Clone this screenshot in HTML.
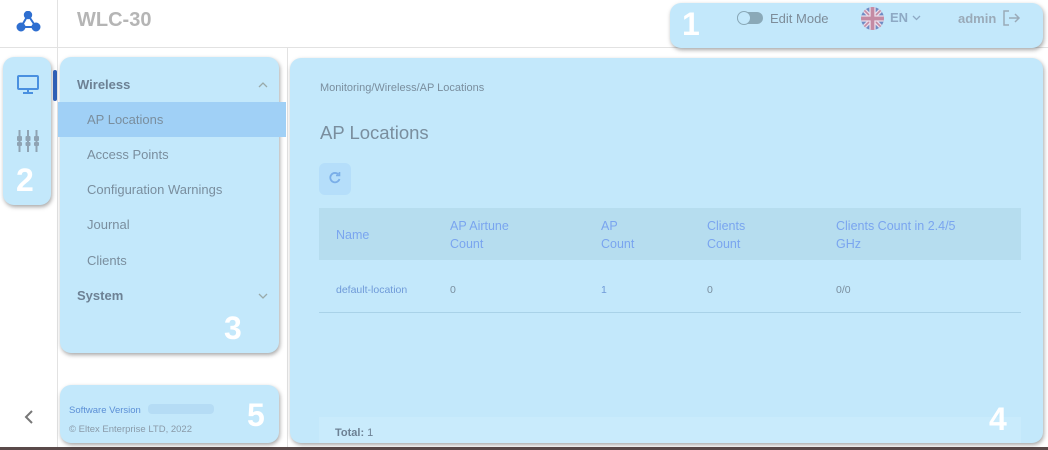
<!DOCTYPE html>
<html><head><meta charset="utf-8"><style>
*{box-sizing:border-box;margin:0;padding:0}
body{width:1048px;height:450px;overflow:hidden;background:#fff;font-family:"Liberation Sans",sans-serif;position:relative;color:#7d8c99}
.a{position:absolute}
.hl{position:absolute;background:#c3e8fb;border-radius:11px;box-shadow:1px 2px 4px rgba(0,0,0,.35)}
.num{position:absolute;color:#fff;font-weight:bold;font-size:32px}
.mi{position:absolute;left:87px;font-size:13px;color:#7a8e9e}
</style></head><body>
<div class="a" style="left:0;top:47px;width:1048px;height:1px;background:#e2e2e2"></div>
<div class="a" style="left:57px;top:0;width:1px;height:450px;background:#e2e2e2"></div>
<div class="a" style="left:287px;top:48px;width:1px;height:402px;background:#e2e2e2"></div>
<div class="a" style="left:0;top:447px;width:1048px;height:3px;background:#5a4a4a"></div>
<svg class="a" style="left:16px;top:11px" width="26" height="22" viewBox="0 0 26 22"><g fill="#2f6fd0" stroke="#2f6fd0" stroke-width="2"><line x1="12" y1="4" x2="5" y2="16"/><line x1="12" y1="4" x2="20" y2="16"/><line x1="5" y1="16" x2="20" y2="16"/><circle cx="12" cy="4" r="3.2"/><circle cx="5" cy="16" r="3.5"/><circle cx="20" cy="16" r="3.5"/></g></svg>
<div class="a" style="left:77px;top:9px;font-size:20px;font-weight:bold;color:#b5b5b5">WLC-30</div>
<svg class="a" style="left:24px;top:410px" width="10" height="14" viewBox="0 0 10 14" fill="none" stroke="#777" stroke-width="2"><path d="M8 1L2 7L8 13"/></svg>

<div class="hl" style="left:670px;top:3px;width:373px;height:45px"></div>
<div class="num" style="left:682px;top:6px">1</div>
<div class="a" style="left:737px;top:12px;width:26px;height:12px;border-radius:6px;background:#8aa9b8"></div>
<div class="a" style="left:737px;top:11px;width:14px;height:14px;border-radius:7px;background:#c3e8fb;border:1px solid #8aa9b8"></div>
<div class="a" style="left:770px;top:11px;font-size:13px;color:#7d8c99">Edit Mode</div>
<svg class="a" style="left:861px;top:7px" width="23" height="23" viewBox="0 0 22 22"><clipPath id="c"><circle cx="11" cy="11" r="11"/></clipPath><g clip-path="url(#c)"><rect width="22" height="22" fill="#6f8cc4"/><path d="M0 0L22 22M22 0L0 22" stroke="#e9dcea" stroke-width="4"/><path d="M0 0L22 22M22 0L0 22" stroke="#c48aa3" stroke-width="1.5"/><path d="M11 0V22M0 11H22" stroke="#e9dcea" stroke-width="6"/><path d="M11 0V22M0 11H22" stroke="#c48aa3" stroke-width="3.5"/></g></svg>
<div class="a" style="left:890px;top:10px;font-size:13px;font-weight:bold;color:#8ea9c4">EN</div>
<svg class="a" style="left:912px;top:15px" width="9" height="6" viewBox="0 0 9 6" fill="none" stroke="#8ea9c4" stroke-width="1.3"><path d="M1 1L4.5 4.5L8 1"/></svg>
<div class="a" style="left:958px;top:11px;font-size:13px;font-weight:bold;color:#9aaab8">admin</div>
<svg class="a" style="left:1003px;top:10px" width="18" height="16" viewBox="0 0 18 16" fill="none" stroke="#9aaab8" stroke-width="1.5"><path d="M6 1H1V15H6M6 8H16M12 4L16 8L12 12"/></svg>

<div class="hl" style="left:3px;top:57px;width:48px;height:148px"></div>
<svg class="a" style="left:16px;top:75px" width="24" height="20" viewBox="0 0 24 20" fill="none" stroke="#4a90e0" stroke-width="2"><rect x="2" y="1" width="20" height="13" rx="1"/><path d="M12 14V18M7 18H17"/></svg>
<svg class="a" style="left:16px;top:129px" width="24" height="24" viewBox="0 0 24 24" fill="#8fa3b3"><rect x="2.5" y="1" width="2" height="22"/><rect x="11" y="1" width="2" height="22"/><rect x="19.5" y="1" width="2" height="22"/><rect x="1" y="7" width="5" height="5" rx="1"/><rect x="9.5" y="7" width="5" height="5" rx="1"/><rect x="18" y="7" width="5" height="5" rx="1"/><rect x="1" y="13" width="5" height="4" rx="1"/><rect x="9.5" y="13" width="5" height="4" rx="1"/><rect x="18" y="13" width="5" height="4" rx="1"/></svg>
<div class="num" style="left:16px;top:162px">2</div>

<div class="a" style="left:53px;top:70px;width:4px;height:31px;background:#2f5fb5;border-radius:2px"></div>
<div class="hl" style="left:60px;top:57px;width:219px;height:296px"></div>
<div class="a" style="left:58px;top:102px;width:228px;height:35px;background:#a0d0f6"></div>
<div class="a" style="left:77px;top:77px;font-size:13px;font-weight:bold;color:#6d8194">Wireless</div>
<svg class="a" style="left:258px;top:82px" width="10" height="6" viewBox="0 0 10 6" fill="none" stroke="#9aa" stroke-width="1.3"><path d="M1 5L5 1L9 5"/></svg>
<div class="mi" style="top:112px">AP Locations</div>
<div class="mi" style="top:147px">Access Points</div>
<div class="mi" style="top:182px">Configuration Warnings</div>
<div class="mi" style="top:217px">Journal</div>
<div class="mi" style="top:253px">Clients</div>
<div class="a" style="left:77px;top:288px;font-size:13px;font-weight:bold;color:#6d8194">System</div>
<svg class="a" style="left:258px;top:293px" width="10" height="6" viewBox="0 0 10 6" fill="none" stroke="#9aa" stroke-width="1.3"><path d="M1 1L5 5L9 1"/></svg>
<div class="num" style="left:224px;top:310px">3</div>

<div class="hl" style="left:60px;top:385px;width:219px;height:58px"></div>
<div class="a" style="left:69px;top:405px;font-size:9.5px;color:#5b8fd6">Software Version</div>
<div class="a" style="left:148px;top:404px;width:66px;height:10px;background:#b5dcf5;border-radius:4px"></div>
<div class="a" style="left:69px;top:424px;font-size:9.5px;color:#8a9aa8">© Eltex Enterprise LTD, 2022</div>
<div class="num" style="left:247px;top:397px">5</div>

<div class="hl" style="left:290px;top:58px;width:753px;height:385px"></div>
<div class="a" style="left:320px;top:82px;font-size:11px;color:#7a8e9e">Monitoring/Wireless/AP Locations</div>
<div class="a" style="left:320px;top:122px;font-size:18.5px;color:#7a8e9e">AP Locations</div>
<div class="a" style="left:319px;top:163px;width:32px;height:32px;border-radius:6px;background:#b5defa"></div>
<svg class="a" style="left:328px;top:171px" width="14" height="14" viewBox="0 0 14 14" fill="none" stroke="#7aaee8" stroke-width="1.8"><path d="M11.5 8A4.7 4.7 0 1 1 10.5 3.5"/><path d="M11.5 1V4.5H8" stroke-width="1.6"/></svg>
<div class="a" style="left:319px;top:208px;width:702px;height:52px;background:#b6ddef"></div>
<div class="a" style="top:217px;left:0;font-size:12.5px;color:#7aa5ef;line-height:18px">
<div class="a" style="left:336px;top:9px;white-space:nowrap">Name</div>
<div class="a" style="left:450px;width:75px">AP Airtune Count</div>
<div class="a" style="left:601px;width:40px">AP Count</div>
<div class="a" style="left:707px;width:60px">Clients Count</div>
<div class="a" style="left:836px;width:140px">Clients Count in 2.4/5 GHz</div>
</div>
<div class="a" style="top:284px;left:0;font-size:10.5px;color:#7a8e9e">
<div class="a" style="left:336px;color:#6f9ad8;white-space:nowrap">default-location</div>
<div class="a" style="left:450px">0</div>
<div class="a" style="left:601px;color:#6f9ad8">1</div>
<div class="a" style="left:707px">0</div>
<div class="a" style="left:836px">0/0</div>
</div>
<div class="a" style="left:319px;top:312px;width:702px;height:1px;background:#a9d2e8"></div>
<div class="a" style="left:319px;top:417px;width:702px;height:26px;background:#c9ebfc"></div>
<div class="a" style="left:335px;top:427px;font-size:11px;color:#6d8194"><b>Total:</b> 1</div>
<div class="num" style="left:989px;top:401px">4</div>
</body></html>
